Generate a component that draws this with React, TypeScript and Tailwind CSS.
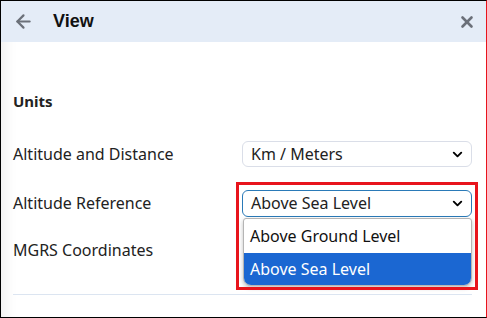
import { ArrowLeft, X, ChevronDown } from "lucide-react";

const font = { fontFamily: '"Noto Sans", "Open Sans", sans-serif' };

function Row({ label, children }: { label: string; children?: React.ReactNode }) {
    return (
        <div className="flex items-center h-[26px]">
            <div className="w-[229px] text-[16px] text-[#222]">{label}</div>
            {children}
        </div>
    );
}

export default function App() {
    return (
        <div
            className="w-[487px] h-[318px] bg-white border-l border-t border-b border-black border-r border-r-[#e8141c] overflow-hidden relative flex flex-col shadow-[inset_14px_0_14px_-10px_rgba(0,0,0,0.07)]"
            style={font}
        >
            {/* Header */}
            <div className="h-[41px] bg-[#e4ecf7] flex items-center pl-[12px] pr-[10px] shrink-0">
                <ArrowLeft className="w-[21px] h-[21px] text-[#6b7079]" strokeWidth={2.5} />
                <span
                    className="ml-[19px] text-[18px] font-bold text-[#111]"
                    style={{ fontFamily: '"Liberation Sans", Arial, sans-serif' }}
                >
                    View
                </span>
                <X className="ml-auto w-[18px] h-[18px] text-[#6b7079]" strokeWidth={3.5} />
            </div>

            {/* Content */}
            <div className="pl-[12px] pr-[14px] pt-[49px] flex flex-col">
                <div className="text-[15px] font-bold text-[#222] h-[20px] leading-[20px]">Units</div>

                <div className="mt-[30px]">
                    <Row label="Altitude and Distance">
                        <div className="w-[230px] h-[26px] border border-[#dadee8] rounded-md flex items-center pl-[8px] pr-[6px] text-[16px] text-[#222]">
                            Km / Meters
                            <ChevronDown className="ml-auto w-[15px] h-[15px] text-black" strokeWidth={3} />
                        </div>
                    </Row>
                </div>

                <div className="mt-[23px]">
                    <Row label="Altitude Reference">
                        <div className="relative w-[230px]">
                            <div className="w-[230px] h-[27px] border border-[#2a7ab8] rounded-md flex items-center pl-[8px] pr-[6px] text-[16px] text-[#222]">
                                Above Sea Level
                                <ChevronDown className="ml-auto w-[15px] h-[15px] text-black" strokeWidth={3} />
                            </div>
                            {/* Open options list */}
                            <div className="absolute left-[1px] top-[28px] w-[229px] z-20 bg-white border border-[#b5b5b5] rounded-t-[3px] rounded-b-[8px] overflow-hidden shadow-[0_2px_4px_rgba(0,0,0,0.25)]">
                                <div className="h-[34px] flex items-center pl-[6px] text-[16px] text-[#111]">Above Ground Level</div>
                                <div className="h-[32px] flex items-center pl-[6px] text-[16px] text-white bg-[#1b67d2]">Above Sea Level</div>
                            </div>
                            {/* Highlight */}
                            <div className="absolute left-[-6px] top-[-8px] w-[242px] h-[108px] border-[3px] border-[#e8141c] z-30 pointer-events-none" />
                        </div>
                    </Row>
                </div>

                <div className="mt-[21px]">
                    <Row label="MGRS Coordinates">
                        <div className="ml-[198px] w-[38px] h-[14px] rounded-full bg-[#b9bcc2] relative z-0" />
                    </Row>
                </div>

                <div className="mt-[31px] h-px bg-[#dce5f1]" />
            </div>
        </div>
    );
}
